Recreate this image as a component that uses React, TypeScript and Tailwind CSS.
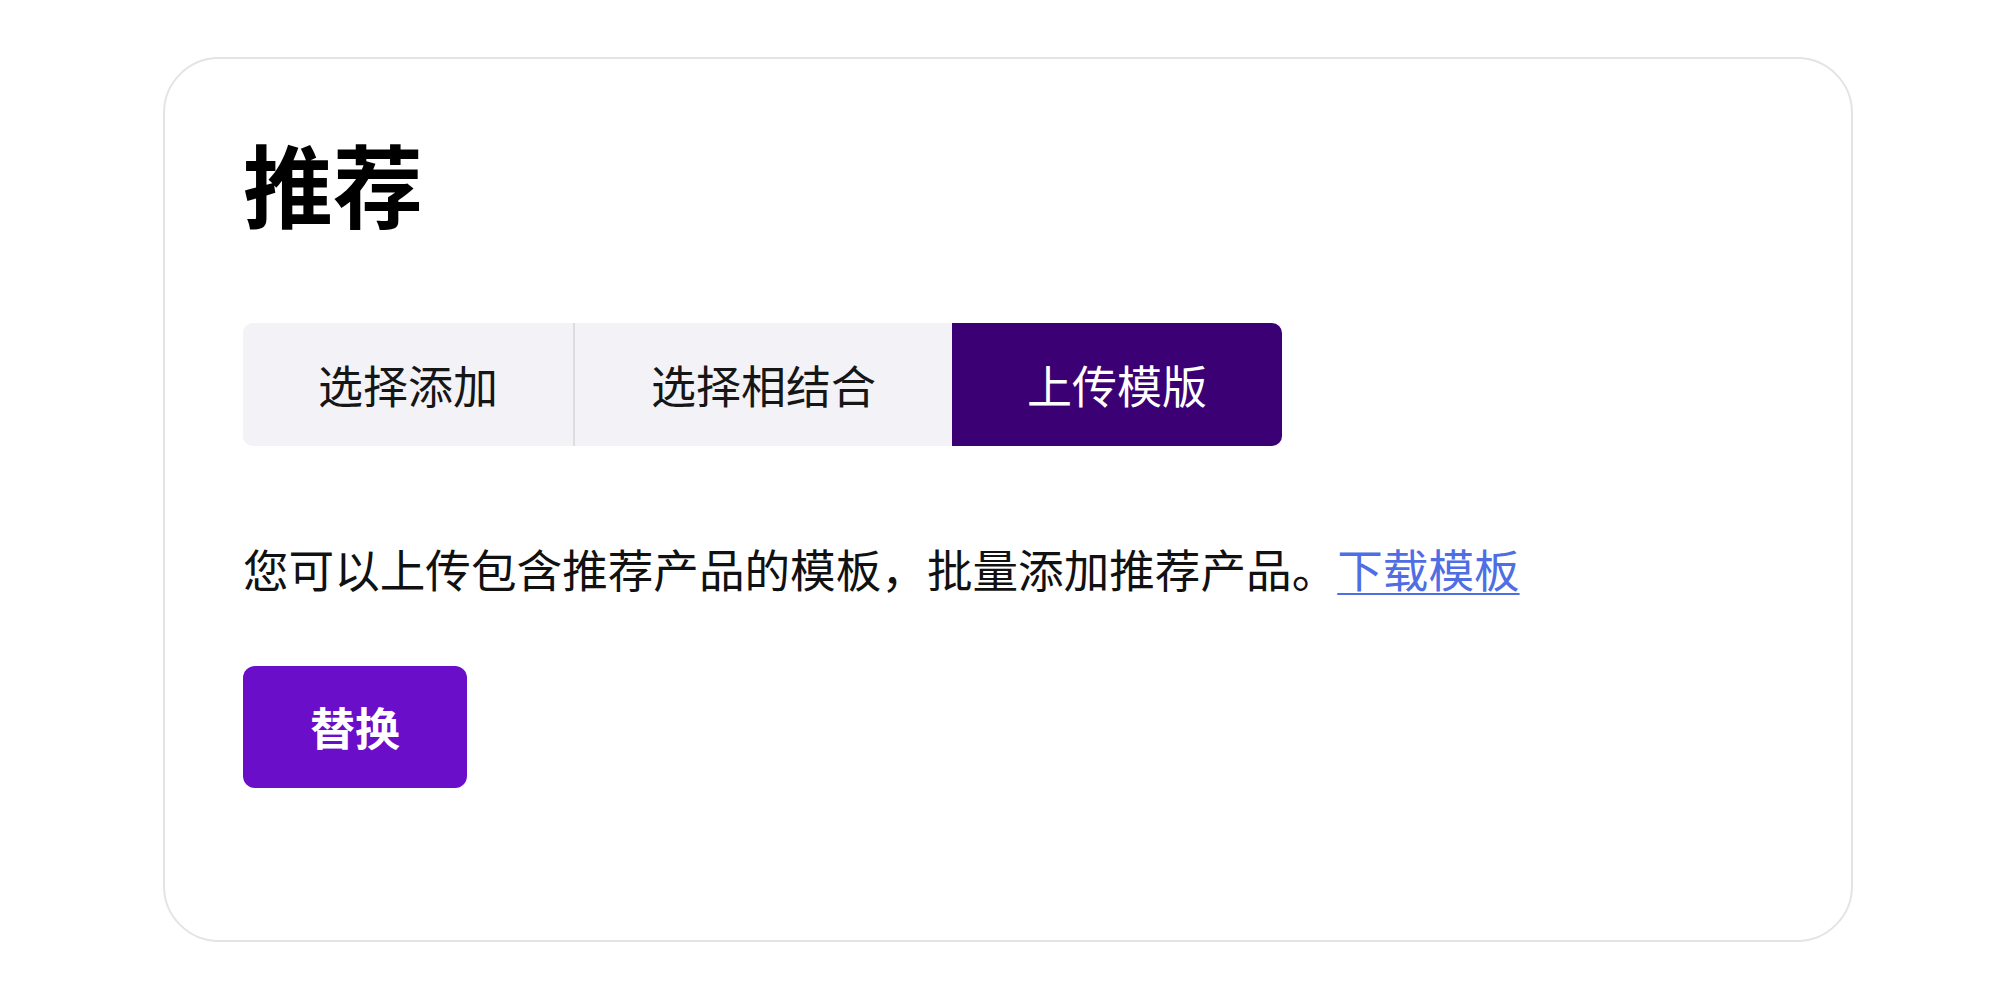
import React, { useState } from 'react';

// 推荐模块：三种添加方式的切换
const tabs = ['选择添加', '选择相结合', '上传模版'];
const tabWidths = ['w-[330px]', 'w-[379px]', 'w-[330px]'];

const App = () => {
  const [active, setActive] = useState(2);

  return (
    <div
      className="min-h-screen w-full bg-white flex items-center justify-center"
      style={{ fontFamily: '"Noto Sans CJK SC", "Noto Sans", sans-serif' }}
    >
      <div className="w-[1690px] h-[885px] border-2 border-[#e4e4e4] rounded-[56px] bg-white pl-[78px] pt-[78px]">
        <h1 className="text-[90px] leading-[90px] font-bold text-black">推荐</h1>

        {/* 切换 */}
        <div className="mt-[96px] flex h-[123px] w-fit rounded-[10px] overflow-hidden bg-[#f3f3f7]">
          {tabs.map((tab, i) => (
            <button
              key={tab}
              type="button"
              onClick={() => setActive(i)}
              className={`${tabWidths[i]} h-full flex items-center justify-center text-[45px] leading-none ${
                active === i
                  ? 'bg-[#3b0073] text-white'
                  : 'bg-[#f3f3f7] text-[#161616]'
              } ${i === 1 ? 'border-l-2 border-[#dcdce2]' : ''}`}
            >
              {tab}
            </button>
          ))}
        </div>

        <p className="mt-[100px] text-[45.6px] leading-[45px] text-[#111111]">
          您可以上传包含推荐产品的模板，批量添加推荐产品。
          <a href="#" className="text-[#4f6ee3] underline underline-offset-[5px] decoration-2">
            下载模板
          </a>
        </p>

        <button
          type="button"
          className="mt-[75px] w-[224px] h-[122px] rounded-[12px] bg-[#6b0ec9] text-white text-[45px] font-bold flex items-center justify-center"
        >
          替换
        </button>
      </div>
    </div>
  );
};

export default App;
